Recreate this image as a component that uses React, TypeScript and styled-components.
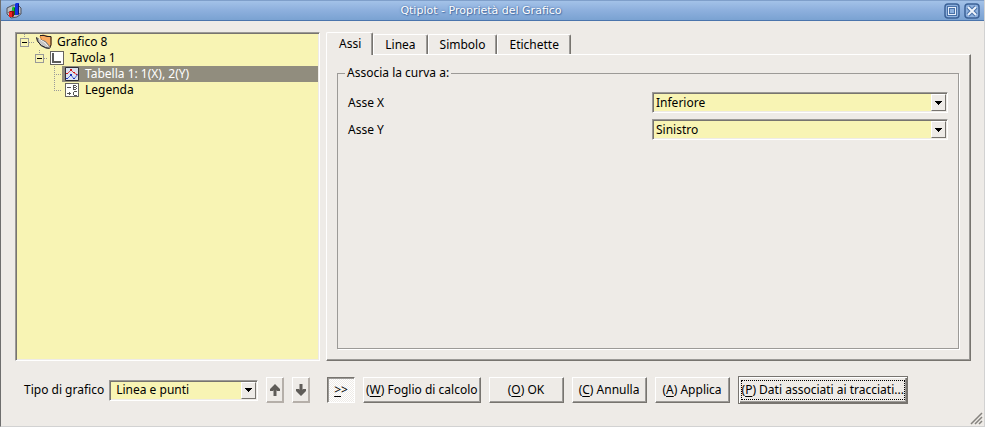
import React, { useState } from "react";
import styled, { createGlobalStyle, css } from "styled-components";

const face = "#eeebe7";
const field = "#f8f4b4";
const dark = "#77746f";
const mid = "#9c9a97";
const sans = '"Noto Sans", "Open Sans", sans-serif';

const sunken = css`
  padding: 1px;
  border: 1px solid;
  border-color: ${mid} #fff #fff ${mid};
  box-shadow: inset 1px 1px 0 ${dark}, inset -1px -1px 0 ${face};
`;

const GlobalStyle = createGlobalStyle`
  *, *::before, *::after { box-sizing: border-box; }
  body { margin: 0; background: ${face}; }
  button, select { font: inherit; color: inherit; border-radius: 0; margin: 0; }
`;

const Window = styled.div`
  display: flex;
  flex-direction: column;
  min-height: 100vh;
  background: ${face};
  border-left: 1px solid #6e6e6e;
  border-right: 1px solid #d2d2d2;
  border-bottom: 1px solid #d2d2d2;
  color: #000;
  font: 12px/16px ${sans};
`;

const TitleBar = styled.header`
  display: flex;
  align-items: center;
  height: 21px;
  padding: 0 4px 0 5px;
  background: linear-gradient(#a3c2e8, #8fb1de 45%, #7aa2d2);
  border-top: 1px solid #7f9fca;
  border-bottom: 1px solid #4a74ac;
`;

const Title = styled.h1`
  flex: 1;
  margin: 0;
  text-align: center;
  color: #fff;
  text-shadow: 0 0 2px #3f659c, 1px 1px 1px #4f76ab;
  font: 11px/18px "DejaVu Sans", sans-serif;
`;

const TitleButton = styled.button`
  display: flex;
  width: 16px;
  height: 16px;
  margin-left: 4px;
  padding: 0;
  border: 0;
  background: none;
`;

const Body = styled.main`
  flex: 1;
  display: grid;
  grid-template-columns: 305px 1fr;
  grid-template-rows: 1fr 28px;
  column-gap: 6px;
  row-gap: 15px;
  padding: 11px 13px 8px 14px;
`;

const Tree = styled.ul`
  margin: 0;
  list-style: none;
  background: ${field};
  ${sunken}
`;

const TreeRow = styled.li`
  display: flex;
  height: 16px;
`;

const TreeItem = styled.span<{ $selected?: boolean }>`
  flex: 1;
  display: flex;
  align-items: center;
  gap: 5px;
  padding-left: 2px;
  white-space: nowrap;
  ${(p) => p.$selected && css`background: #918d7e; color: #fff;`}
`;

const Tabs = styled.section`
  display: flex;
  flex-direction: column;
  min-width: 0;
`;

const TabList = styled.div`
  display: flex;
  align-items: flex-end;
  height: 22px;
`;

const Tab = styled.button<{ $active: boolean }>`
  position: relative;
  height: 20px;
  padding: 0 11px;
  background: ${face};
  border: 1px solid;
  border-color: #fff ${dark} #fff #fff;
  border-bottom: 0;
  box-shadow: inset -1px 0 0 ${mid};
  border-top-left-radius: 2px;
  border-top-right-radius: 2px;
  ${(p) => p.$active && css`
    height: 23px;
    margin-bottom: -1px;
    padding-left: 12px;
    z-index: 1;
  `}
`;

const TabPanel = styled.div`
  flex: 1;
  display: flex;
  padding: 10px 11px 11px 10px;
  border: 1px solid;
  border-color: #fff ${dark} ${dark} #fff;
  box-shadow: inset -1px -1px 0 ${mid};
`;

const Group = styled.fieldset`
  flex: 1;
  min-width: 0;
  margin: 0;
  padding: 11px 10px;
  border: 1px solid ${mid};
  box-shadow: 1px 1px 0 #fff;
`;

const Legend = styled.legend`
  padding: 0 2px;
  margin-left: -3px;
`;

const FormRow = styled.div`
  display: grid;
  grid-template-columns: 1fr 1fr;
  column-gap: 8px;
  align-items: center;
  margin-bottom: 6px;
`;

const Combo = styled.span<{ $width?: number }>`
  display: grid;
  flex-shrink: 0;
  grid-template-columns: 1fr 15px;
  height: 21px;
  width: ${(p) => (p.$width ? p.$width + "px" : "auto")};
  background: ${field};
  ${sunken}
`;

const Select = styled.select`
  grid-area: 1 / 1 / 2 / 3;
  appearance: none;
  min-width: 0;
  padding: 0 20px 0 2px;
  border: 0;
  background: transparent;
  outline: 0;
`;

const WideSelect = styled(Select)`
  padding-left: 5px;
`;

const ComboArrow = styled.span`
  grid-area: 1 / 2 / 2 / 3;
  display: flex;
  align-items: center;
  justify-content: center;
  pointer-events: none;
  background: ${face};
  border: 1px solid;
  border-color: #fff ${dark} ${dark} #fff;
`;

const Bar = styled.div`
  display: flex;
  align-items: center;
  min-width: 0;
  gap: 8px;
  padding-left: 1px;
`;

const TypeBar = styled(Bar)`
  padding: 0 10px 0 9px;
`;

const TypeField = styled.div`
  flex: 1;
  display: flex;
  align-items: center;
  gap: 5px;
  white-space: nowrap;
`;

const Button = styled.button`
  height: 26px;
  min-width: 75px;
  padding: 0 2px;
  white-space: nowrap;
  background: ${face};
  border: 1px solid;
  border-color: #fff ${dark} ${dark} #fff;
  box-shadow: inset -1px -1px 0 ${mid};
`;

const ArrowButton = styled(Button)`
  display: flex;
  align-items: center;
  justify-content: center;
  width: 18px;
  min-width: 18px;
  padding: 0;
  border-color: #fff #b5afa9 #b5afa9 #fff;
  box-shadow: inset -1px -1px 0 #b5afa9;
`;

const PressedButton = styled(Button)`
  width: 28px;
  min-width: 28px;
  background: repeating-conic-gradient(#fff 0 25%, ${face} 0 50%) 0 0 / 2px 2px;
  border-color: ${dark} #fff #fff ${dark};
  box-shadow: inset 1px 1px 0 ${mid};
`;

const DefaultButton = styled(Button)`
  height: 28px;
  padding: 2px;
  border: 1px solid ${dark};
  box-shadow: inset 1px 1px 0 #fff, inset -1px -1px 0 ${dark}, inset -2px -2px 0 ${mid};
`;

const Focus = styled.span`
  display: block;
  padding: 1px 0;
  border: 1px dotted #000;
`;

const Key = styled.u`
  text-underline-offset: 2px;
`;

const Foot = styled.footer`
  display: flex;
  justify-content: flex-end;
  height: 14px;
`;

const AppIcon = () => (
  <svg width="16" height="16" viewBox="0 0 16 16" aria-hidden="true">
    <path d="M1 5l6-3h5l3 3v6l-4 3-6 1-4-4z" fill="#b9bcc2" stroke="#4c5260" />
    <path d="M1 10l5-2 9 3M7 2v6" fill="none" stroke="#70747c" />
    <path d="M9 1l1-1h3v11l-1 1H9z" fill="#1230e0" />
    <path d="M12 1h1v10l-1 1z" fill="#0a1670" />
    <path d="M6 5l1-1h2v8H6z" fill="#16c02c" />
    <path d="M8 5h1v7H8z" fill="#0a6a18" />
    <path d="M3 9l1-1h4v5l-1 1H3z" fill="#8a1010" />
    <path d="M3 9h3v5H3z" fill="#f02020" />
  </svg>
);

const FolderIcon = () => (
  <svg width="16" height="16" viewBox="0 0 16 16" aria-hidden="true">
    <path d="M4 2l3-1 4 1 4 1v8l-1 3-3-1-5-6z" fill="#f9ab62" stroke="#d07830" />
    <path d="M4 1.500h4l3 1h4v8l-1 3" fill="none" stroke="#222" />
    <path d="M.5 3.500l3 2 6 2 5 6-4 1-6-3z" fill="#c6c6c6" stroke="#777" />
    <path d="M.5 3.500l1 4 4 4 4 2 4 1" fill="none" stroke="#222" />
    <path d="M3 5l5 3 4 4" fill="none" stroke="#eee" />
  </svg>
);

const LayerIcon = () => (
  <svg width="16" height="16" viewBox="0 0 16 16" aria-hidden="true" shapeRendering="crispEdges">
    <path d="M1.500 1.500h13v13h-13z" fill="#fff" stroke="#66645f" />
    <path d="M3 3h2v8h7v2H3z" fill="#5c5c5c" />
  </svg>
);

const CurveIcon = () => (
  <svg width="16" height="16" viewBox="0 0 16 16" aria-hidden="true">
    <path d="M1.500 1.500h13v13h-13z" fill="#dbe3f2" stroke="#2c2c34" />
    <path d="M3 8l4-4 3 3 4 2" fill="none" stroke="#e05050" />
    <path d="M2 7h2v1H2zM6 3h2v2H6zM9 6h2v1H9zM12 8h2v1h-2z" fill="#d01818" />
    <path d="M3 13l4-4 3 4 4-5" fill="none" stroke="#5068d0" />
    <path d="M2 12h2v1H2zM6 8h2v2H6zM9 12h2v1H9z" fill="#1c30b8" />
  </svg>
);

const LegendIcon = () => (
  <svg width="16" height="16" viewBox="0 0 16 16" aria-hidden="true" shapeRendering="crispEdges">
    <path d="M1.500 1.500h13v13h-13z" fill="#fff" stroke="#66645f" />
    <path d="M3 5.500h4M3 11.500h4M5.500 10v3M9.500 3v5M9 3.500h3M9 5.500h3M9 7.500h3M12.500 4v1M12.500 6v1M9.500 10v3M10 9.500h3M10 13.500h3" fill="none" stroke="#555" />
  </svg>
);

const branchLines = ["M7.500 0v4M12 8.500h5", "M22.500 0v4M27 8.500h3", "M37.500 0v16M37 8.500h8", "M37.500 0v9M37 8.500h8"];

const Branch = ({ kind, width, box }: { kind: number; width: number; box?: number }) => (
  <svg width={width} height="16" aria-hidden="true" shapeRendering="crispEdges">
    <path d={branchLines[kind]} stroke="#999" strokeDasharray="1 1" fill="none" />
    {box !== undefined && (
      <>
        <rect x={box + 0.5} y="4.500" width="8" height="8" fill={field} stroke="#999" />
        <path d={`M${box + 2} 8.500h5`} stroke="#000" />
      </>
    )}
  </svg>
);

type ComboProps = { id: string; value: string; others: string[]; width?: number };

const ComboBox = ({ id, value, others, width }: ComboProps) => {
  const Field = width ? WideSelect : Select;
  return (
    <Combo $width={width}>
      <Field id={id} defaultValue={value}>
        {[value, ...others].map((o) => (
          <option key={o}>{o}</option>
        ))}
      </Field>
      <ComboArrow>
        <svg width="7" height="4" aria-hidden="true" shapeRendering="crispEdges">
          <path d="M0 0h7v1H0zM1 1h5v1H1zM2 2h3v1H2zM3 3h1v1H3z" />
        </svg>
      </ComboArrow>
    </Combo>
  );
};

const tree = [
  { label: "Grafico 8", width: 17, box: 3, Icon: FolderIcon },
  { label: "Tavola 1", width: 30, box: 18, Icon: LayerIcon },
  { label: "Tabella 1: 1(X), 2(Y)", width: 45, Icon: CurveIcon, selected: true },
  { label: "Legenda", width: 45, Icon: LegendIcon },
];

export default function App() {
  const [tab, setTab] = useState("Assi");
  return (
    <>
      <GlobalStyle />
      <Window>
        <TitleBar>
          <AppIcon />
          <Title>Qtiplot - Proprietà del Grafico</Title>
          <TitleButton aria-label="Ingrandisci">
            <svg width="16" height="16" aria-hidden="true">
              <rect x="1" y="1" width="14" height="14" rx="3" fill="#8db0de" stroke="#3c6297" strokeWidth="1.500" />
              <rect x="3.500" y="3.500" width="9" height="9" fill="#e8effa" stroke="#4a72a8" />
              <rect x="5.500" y="5.500" width="5" height="5" fill="#8db0de" stroke="#4a72a8" />
            </svg>
          </TitleButton>
          <TitleButton aria-label="Chiudi">
            <svg width="16" height="16" aria-hidden="true">
              <rect x="1" y="1" width="14" height="14" rx="3" fill="#8db0de" stroke="#3c6297" strokeWidth="1.500" />
              <path d="M4 4l8 8M12 4l-8 8" stroke="#4a72a8" strokeWidth="4" />
              <path d="M4 4l8 8M12 4l-8 8" stroke="#f0f5fc" strokeWidth="2" />
            </svg>
          </TitleButton>
        </TitleBar>
        <Body>
          <Tree>
            {tree.map(({ label, width, box, Icon, selected }, i) => (
              <TreeRow key={label}>
                <Branch kind={i} width={width} box={box} />
                <TreeItem $selected={selected}>
                  <Icon />
                  {label}
                </TreeItem>
              </TreeRow>
            ))}
          </Tree>
          <Tabs>
            <TabList role="tablist">
              {["Assi", "Linea", "Simbolo", "Etichette"].map((t) => (
                <Tab key={t} role="tab" aria-selected={t === tab} $active={t === tab} onClick={() => setTab(t)}>
                  {t}
                </Tab>
              ))}
            </TabList>
            <TabPanel role="tabpanel">
              <Group>
                <Legend>Associa la curva a:</Legend>
                <FormRow>
                  <label htmlFor="x">Asse X</label>
                  <ComboBox id="x" value="Inferiore" others={["Superiore"]} />
                </FormRow>
                <FormRow>
                  <label htmlFor="y">Asse Y</label>
                  <ComboBox id="y" value="Sinistro" others={["Destro"]} />
                </FormRow>
              </Group>
            </TabPanel>
          </Tabs>
          <TypeBar>
            <TypeField>
              <label htmlFor="type">Tipo di grafico</label>
              <ComboBox id="type" value="Linea e punti" others={["Linea", "Punti"]} width={149} />
            </TypeField>
            <ArrowButton aria-label="Su">
              <svg width="12" height="14" aria-hidden="true">
                <path d="M6 1l5 5v2H8L7.500 7v6h-3V7L4 8H1V6z" fill="#5f5c58" />
              </svg>
            </ArrowButton>
            <ArrowButton aria-label="Giù">
              <svg width="12" height="14" aria-hidden="true">
                <path d="M6 13l5-5V6H8L7.500 7V1h-3v6L4 6H1v2z" fill="#5f5c58" />
              </svg>
            </ArrowButton>
          </TypeBar>
          <Bar>
            <PressedButton><Key>&gt;</Key>&gt;</PressedButton>
            <Button>(<Key>W</Key>) Foglio di calcolo</Button>
            <Button>(<Key>O</Key>) OK</Button>
            <Button>(<Key>C</Key>) Annulla</Button>
            <Button>(<Key>A</Key>) Applica</Button>
            <DefaultButton>
              <Focus>(<Key>P</Key>) Dati associati ai tracciati...</Focus>
            </DefaultButton>
          </Bar>
        </Body>
        <Foot>
          <svg width="14" height="14" aria-hidden="true">
            <path d="M1 12L12 1M5 12l7-7M9 12l3-3" stroke="#85827e" strokeWidth="1.500" />
          </svg>
        </Foot>
      </Window>
    </>
  );
}
